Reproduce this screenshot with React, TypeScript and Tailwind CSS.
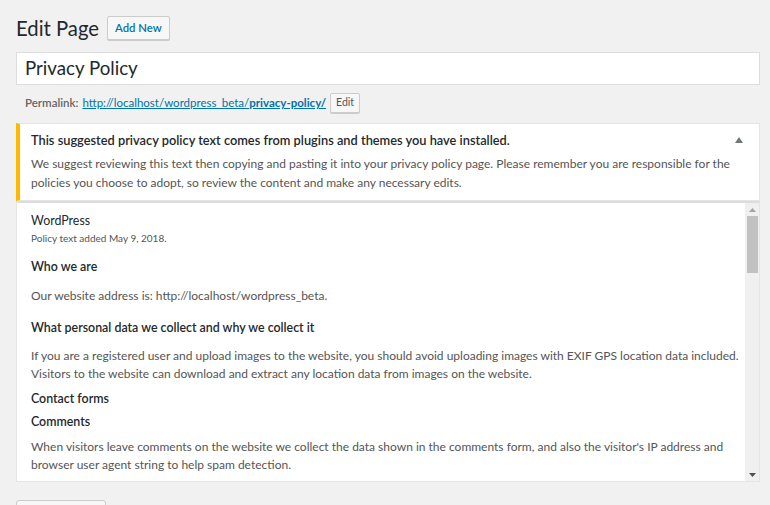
import React from 'react';

const font = { fontFamily: 'Lato, "Open Sans", Arial, sans-serif' };

const Para: React.FC<{ children: React.ReactNode }> = ({ children }) => (
  <p className="text-[12px] leading-[18px] text-[#555]">{children}</p>
);

const Heading: React.FC<{ children: React.ReactNode }> = ({ children }) => (
  <h3 className="text-[12.4px] leading-[18px] font-semibold text-[#23282d]">{children}</h3>
);

export default function App() {
  return (
    <div className="min-h-[505px] bg-[#f1f1f1] pl-4 pr-[10px] pt-[14px] overflow-hidden" style={font}>
      {/* header */}
      <div className="flex items-center gap-2 h-[28px]">
        <h1 className="text-[20.3px] text-[#23282d] leading-none">Edit Page</h1>
        <button className="h-[24px] px-[7px] border border-[#ccc] bg-[#f7f7f7] rounded-[2px] text-[11.3px] font-semibold text-[#0073aa] shadow-[0_1px_0_#ccc]">
          Add New
        </button>
      </div>

      {/* title */}
      <div className="mt-[10px] h-[33px] bg-white border border-[#ddd] flex items-center px-2">
        <span className="text-[18.7px] text-[#23282d]">Privacy Policy</span>
      </div>

      {/* permalink */}
      <div className="mt-[8px] flex items-center gap-1 pl-[9px] h-[20px] text-[11.5px] text-[#666]">
        <span className="font-semibold">Permalink:</span>
        <a className="text-[#0073aa] underline">
          http://localhost/wordpress_beta/<span className="font-bold">privacy-policy/</span>
        </a>
        <button className="h-[20px] px-[5px] border border-[#ccc] bg-[#f7f7f7] rounded-[2px] text-[10.5px] text-[#555] shadow-[0_1px_0_#ccc]">
          Edit
        </button>
      </div>

      {/* notice */}
      <div className="mt-[10px] bg-white border border-[#e5e5e5] border-l-4 border-l-[#ffb900] pl-[11px] pr-4 pt-[6px] pb-[8px]">
        <div className="flex items-center justify-between">
          <h2 className="text-[12.8px] leading-[20px] font-semibold text-[#23282d]">
            This suggested privacy policy text comes from plugins and themes you have installed.
          </h2>
          <svg width="8" height="6" viewBox="0 0 8 6">
            <path d="M0 6 L4 0 L8 6 Z" fill="#72777c" />
          </svg>
        </div>
        <p className="mt-[4px] text-[12px] leading-[19px] text-[#555]">
          We suggest reviewing this text then copying and pasting it into your privacy policy page. Please remember you are responsible for the policies you choose to adopt, so review the content and make any necessary edits.
        </p>
      </div>

      {/* policy content */}
      <div className="h-[281px] bg-white border border-[#e5e5e5] border-t-[#ddd] border-t-2 flex">
        <div className="flex-1 pl-[14px] pr-[3px] pt-[9px] flex flex-col">
          <div className="text-[12.4px] leading-[18px] text-[#23282d]">WordPress</div>
          <div className="text-[10px] leading-[16px] text-[#555]">Policy text added May 9, 2018.</div>
          <div className="mt-[12px]"><Heading>Who we are</Heading></div>
          <div className="mt-[11px]"><Para>Our website address is: http://localhost/wordpress_beta.</Para></div>
          <div className="mt-[14px]"><Heading>What personal data we collect and why we collect it</Heading></div>
          <div className="mt-[10px]">
            <Para>
              If you are a registered user and upload images to the website, you should avoid uploading images with EXIF GPS location data included. Visitors to the website can download and extract any location data from images on the website.
            </Para>
          </div>
          <div className="mt-[7px]"><Heading>Contact forms</Heading></div>
          <div className="mt-[5px]"><Heading>Comments</Heading></div>
          <div className="mt-[7px] pr-[10px]">
            <Para>
              When visitors leave comments on the website we collect the data shown in the comments form, and also the visitor&#39;s IP address and browser user agent string to help spam detection.
            </Para>
          </div>
        </div>
        {/* scrollbar */}
        <div className="w-[14px] bg-[#f0f0f0] flex flex-col items-center">
          <div className="h-[13px] flex items-center justify-center">
            <svg width="7" height="4" viewBox="0 0 7 4"><path d="M0 4 L3.5 0 L7 4 Z" fill="#a3a3a3" /></svg>
          </div>
          <div className="w-[11px] h-[57px] bg-[#c1c1c1] ml-[1px]" />
          <div className="flex-1" />
          <div className="h-[13px] flex items-center justify-center">
            <svg width="7" height="4" viewBox="0 0 7 4"><path d="M0 0 L3.5 4 L7 0 Z" fill="#505050" /></svg>
          </div>
        </div>
      </div>

      <div className="mt-[18px] w-[90px] h-[28px] bg-[#f7f7f7] border border-[#ccc] rounded-[3px]" />
    </div>
  );
}
